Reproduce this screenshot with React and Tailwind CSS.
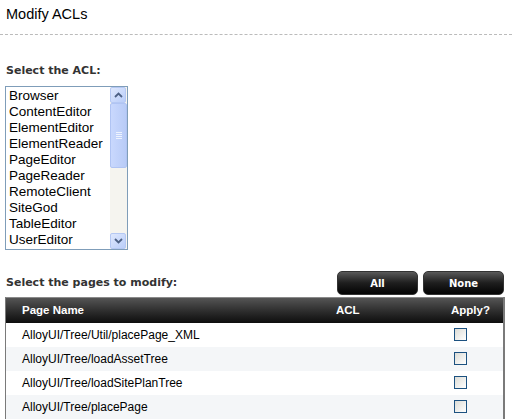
import React from 'react'

const acls = [
  'Browser',
  'ContentEditor',
  'ElementEditor',
  'ElementReader',
  'PageEditor',
  'PageReader',
  'RemoteClient',
  'SiteGod',
  'TableEditor',
  'UserEditor',
]

const pages = [
  'AlloyUI/Tree/Util/placePage_XML',
  'AlloyUI/Tree/loadAssetTree',
  'AlloyUI/Tree/loadSitePlanTree',
  'AlloyUI/Tree/placePage',
]

const Chevron = ({ up }) => (
  <svg width="9" height="6" viewBox="0 0 9 6">
    <path
      d={up ? 'M1 5 L4.5 1.5 L8 5' : 'M1 1 L4.5 4.5 L8 1'}
      fill="none"
      stroke="#4d6185"
      strokeWidth="1.8"
    />
  </svg>
)

const ScrollButton = ({ up }) => (
  <div className="h-[16px] w-[16px] rounded-[2px] border border-[#b5c8f3] bg-gradient-to-br from-[#dfe8fd] to-[#b9cdf9] flex items-center justify-center">
    <Chevron up={up} />
  </div>
)

const AclList = () => (
  <div className="flex w-[123px] h-[164px] border border-[#7f9db9] bg-white">
    <div className="flex-1 pt-[1px] pl-[3px] overflow-hidden">
      {acls.map(a => (
        <div key={a} className="h-[16px] leading-[16px] text-[13.5px] text-black whitespace-nowrap">
          {a}
        </div>
      ))}
    </div>
    <div className="w-[17px] flex flex-col bg-[#f5f4ef]">
      <ScrollButton up />
      <div className="h-[65px] rounded-[2px] border border-[#b0c4f3] bg-gradient-to-r from-[#c9d8fd] to-[#b8cbf7] flex flex-col items-center justify-center gap-[1px]">
        <div className="w-[6px] h-px bg-[#eef3fe]" />
        <div className="w-[6px] h-px bg-[#eef3fe]" />
        <div className="w-[6px] h-px bg-[#eef3fe]" />
        <div className="w-[6px] h-px bg-[#eef3fe]" />
      </div>
      <div className="flex-1" />
      <ScrollButton />
    </div>
  </div>
)

const DarkButton = ({ children }) => (
  <button className="w-[81px] h-[24px] rounded-[5px] bg-gradient-to-b from-[#5a5a5a] via-[#1e1e1e] to-[#050505] border border-[#333] text-white text-[10px] font-bold font-['DejaVu_Sans',sans-serif]">
    {children}
  </button>
)

const Checkbox = () => (
  <div className="w-[13px] h-[13px] border border-[#1c5180] bg-gradient-to-br from-[#dcdcd6] to-white" />
)

export default function App() {
  return (
    <div className="w-[512px] h-[420px] bg-white overflow-hidden font-['Liberation_Sans',Arial,sans-serif] text-black">
      <div className="px-[6px] pt-[6px]">
        <h1 className="text-[14.5px] leading-[16px]">Modify ACLs</h1>
      </div>
      <div className="mt-[12px] border-t border-dashed border-[#bbbbbb]" />

      <div className="pl-[5px] pr-[7px]">
        <div className="mt-[29px] pl-px text-[11px] leading-[14px] font-bold text-[#333] font-['DejaVu_Sans',sans-serif]">
          Select the ACL:
        </div>
        <div className="mt-[8px]">
          <AclList />
        </div>

        <div className="mt-[21px] flex items-center justify-between h-[24px]">
          <span className="pl-px text-[11px] font-bold text-[#333] font-['DejaVu_Sans',sans-serif]">
            Select the pages to modify:
          </span>
          <div className="flex gap-[5px] pr-px">
            <DarkButton>All</DarkButton>
            <DarkButton>None</DarkButton>
          </div>
        </div>

        <div className="mt-[2px] border-l border-r-2 border-[#7a7a7a]">
          <div className="h-[26px] flex items-center border-t border-[#8a8a8a] bg-gradient-to-b from-[#555] to-[#0e0e0e] text-white text-[11.5px] font-bold">
            <div className="w-[330px] pl-[16px]">Page Name</div>
            <div className="flex-1">ACL</div>
            <div className="w-[60px] text-right pr-[13px]">Apply?</div>
          </div>
          {pages.map((p, i) => (
            <div
              key={p}
              className={`h-[24px] flex items-center text-[12px] ${i % 2 === 1 ? 'bg-[#f4f6f8]' : 'bg-white'}`}
            >
              <div className="w-[330px] pl-[16px] whitespace-nowrap">{p}</div>
              <div className="flex-1" />
              <div className="w-[49px] pb-[2px]">
                <Checkbox />
              </div>
            </div>
          ))}
        </div>
      </div>
    </div>
  )
}
